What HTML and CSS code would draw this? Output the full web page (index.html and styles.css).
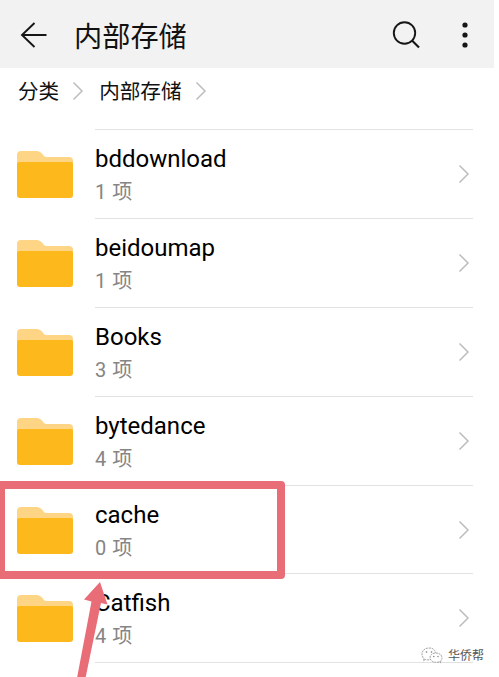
FILE: index.html
```html
<!DOCTYPE html>
<html lang="zh-CN">
<head>
    <meta charset="UTF-8">
    <meta name="viewport" content="width=device-width, initial-scale=1.0">
    <title>内部存储</title>
    <link rel="stylesheet" href="styles.css">
</head>
<body>
    <!-- Shared icons -->
    <svg class="symbols" width="0" height="0">
        <symbol id="folder" viewBox="0 0 58 50">
            <path d="M1 20V5Q1 1 5 1H21Q24 1 26 3.5L27.500 5.500Q28.500 7 31 7H53Q57 7 57 11V20Z" fill="#fdd584"/>
            <path d="M1 14Q1 12 3 12H55Q57 12 57 14V45Q57 48 54 48H4Q1 48 1 45Z" fill="#fdb91b"/>
        </symbol>
        <symbol id="chevron" viewBox="0 0 12 20">
            <path d="M1.500 1.500L10 10L1.500 18.500" fill="none" stroke="#bdbdbd" stroke-width="1.500"/>
        </symbol>
    </svg>

    <div class="screen">
        <header class="toolbar">
            <svg class="back" width="28" height="28" viewBox="0 0 28 28">
                <path d="M26.500 14H2M14.500 2L2 14L14.500 26" fill="none" stroke="#161616" stroke-width="1.900"/>
            </svg>
            <h1>内部存储</h1>
            <svg class="search" width="28" height="28" viewBox="0 0 28 28">
                <circle cx="12.500" cy="12" r="10.700" fill="none" stroke="#161616" stroke-width="1.900"/>
                <path d="M20 19.500L27 26.500" stroke="#161616" stroke-width="2.100"/>
            </svg>
            <svg class="more" width="6" height="28" viewBox="0 0 6 28">
                <circle cx="3" cy="4" r="2.600"/>
                <circle cx="3" cy="14" r="2.600"/>
                <circle cx="3" cy="24" r="2.600"/>
            </svg>
        </header>

        <nav class="breadcrumb">
            <span>分类</span>
            <svg class="chevron"><use href="#chevron"/></svg>
            <span>内部存储</span>
            <svg class="chevron"><use href="#chevron"/></svg>
        </nav>

        <!-- Folder list -->
        <ul class="list">
            <li class="row">
                <svg class="folder"><use href="#folder"/></svg>
                <div class="info">
                    <div class="text"><p class="name">bddownload</p><p class="count">1 项</p></div>
                    <svg class="chevron"><use href="#chevron"/></svg>
                </div>
            </li>
            <li class="row">
                <svg class="folder"><use href="#folder"/></svg>
                <div class="info">
                    <div class="text"><p class="name">beidoumap</p><p class="count">1 项</p></div>
                    <svg class="chevron"><use href="#chevron"/></svg>
                </div>
            </li>
            <li class="row">
                <svg class="folder"><use href="#folder"/></svg>
                <div class="info">
                    <div class="text"><p class="name">Books</p><p class="count">3 项</p></div>
                    <svg class="chevron"><use href="#chevron"/></svg>
                </div>
            </li>
            <li class="row">
                <svg class="folder"><use href="#folder"/></svg>
                <div class="info">
                    <div class="text"><p class="name">bytedance</p><p class="count">4 项</p></div>
                    <svg class="chevron"><use href="#chevron"/></svg>
                </div>
            </li>
            <li class="row">
                <svg class="folder"><use href="#folder"/></svg>
                <div class="info">
                    <div class="text"><p class="name">cache</p><p class="count">0 项</p></div>
                    <svg class="chevron"><use href="#chevron"/></svg>
                </div>
                <div class="highlight"></div>
            </li>
            <li class="row">
                <svg class="folder"><use href="#folder"/></svg>
                <div class="info">
                    <div class="text"><p class="name">Catfish</p><p class="count">4 项</p></div>
                    <svg class="chevron"><use href="#chevron"/></svg>
                </div>
                <svg class="arrow" width="32" height="96" viewBox="0 0 32 96">
                    <path d="M24 0L31.500 22.500L25 21L9.500 96H1L15.500 19.500L8 17.500Z" fill="#e96d77"/>
                </svg>
            </li>
            <li class="row">
                <div class="info"></div>
            </li>
        </ul>

        <!-- Account watermark -->
        <div class="watermark">
            <svg width="22" height="17" viewBox="0 0 22 17">
                <g fill="#fff" stroke="#8c8c8c" stroke-width="0.800" stroke-dasharray="2 0.800">
                    <path d="M4 12.500L2.500 14L3 11.500C-1 8 1 1 8 1S15.500 7 13.500 10Q9 14 4 12.500Z"/>
                    <path d="M18.500 14.800L20 16L19.700 13.800C22.500 11 20.500 6 15 6S8 10.500 9.700 13Q13 16.500 18.500 14.800Z"/>
                </g>
                <g fill="#777">
                    <circle cx="5.500" cy="5" r="0.800"/>
                    <circle cx="10.500" cy="5" r="0.800"/>
                    <circle cx="12.800" cy="9.500" r="0.700"/>
                    <circle cx="17" cy="9.500" r="0.700"/>
                </g>
            </svg>
            <span>华侨帮</span>
        </div>
    </div>
</body>
</html>
```
FILE: styles.css
```css
* {
    box-sizing: border-box;
}
body {
    margin: 0;
    background: #fff;
    color: #111;
    font-family: Roboto, "Noto Sans CJK SC", sans-serif;
}
h1, p, ul {
    margin: 0;
    padding: 0;
}
svg {
    display: block;
    flex-shrink: 0;
}
.symbols {
    position: absolute;
}
.screen {
    position: relative;
    width: 494px;
    height: 677px;
    overflow: hidden;
}
.toolbar {
    display: flex;
    align-items: center;
    height: 68px;
    padding: 2px 26px 0 20px;
    background: #f2f2f2;
}
.toolbar h1 {
    flex: 1;
    margin-left: 26px;
    padding-top: 5px;
    font-size: 28.2px;
    font-weight: 400;
    line-height: 40px;
}
.more {
    margin-left: 42px;
    fill: #161616;
}
.breadcrumb {
    display: flex;
    align-items: center;
    height: 61px;
    padding: 0 0 15px 18px;
    font-size: 20.6px;
    line-height: 30px;
}
.breadcrumb span {
    padding-top: 1px;
}
.breadcrumb .chevron {
    margin: 0 15px 0 13px;
}
.chevron {
    width: 12px;
    height: 20px;
}
.list {
    list-style: none;
}
.row {
    position: relative;
    display: flex;
    height: 88.9px;
    padding: 0 21px 0 95px;
}
.folder {
    width: 58px;
    height: 50px;
    margin: 21px 21px 0 -79px;
}
.info {
    display: flex;
    flex: 1;
    justify-content: space-between;
    border-top: 1px solid #e2e2e2;
}
.info .chevron {
    margin: 34px 3px 0 0;
}
.text {
    padding-top: 12px;
}
.name {
    color: #000;
    font-size: 24px;
    line-height: 34px;
}
.count {
    color: #858585;
    font-size: 20px;
    line-height: 32px;
    word-spacing: 1px;
}
/* Frame and arrow pointing at the cache folder */
.highlight {
    position: absolute;
    z-index: 1;
    top: -4px;
    left: -3px;
    width: 288px;
    height: 98px;
    border: 8px solid #e96d77;
    border-radius: 4px;
}
.arrow {
    position: absolute;
    top: 9px;
    left: 76px;
}
.watermark {
    position: absolute;
    top: 647px;
    left: 421px;
    display: flex;
    gap: 5px;
    color: #555;
    font-size: 12px;
    line-height: 18px;
}
```
